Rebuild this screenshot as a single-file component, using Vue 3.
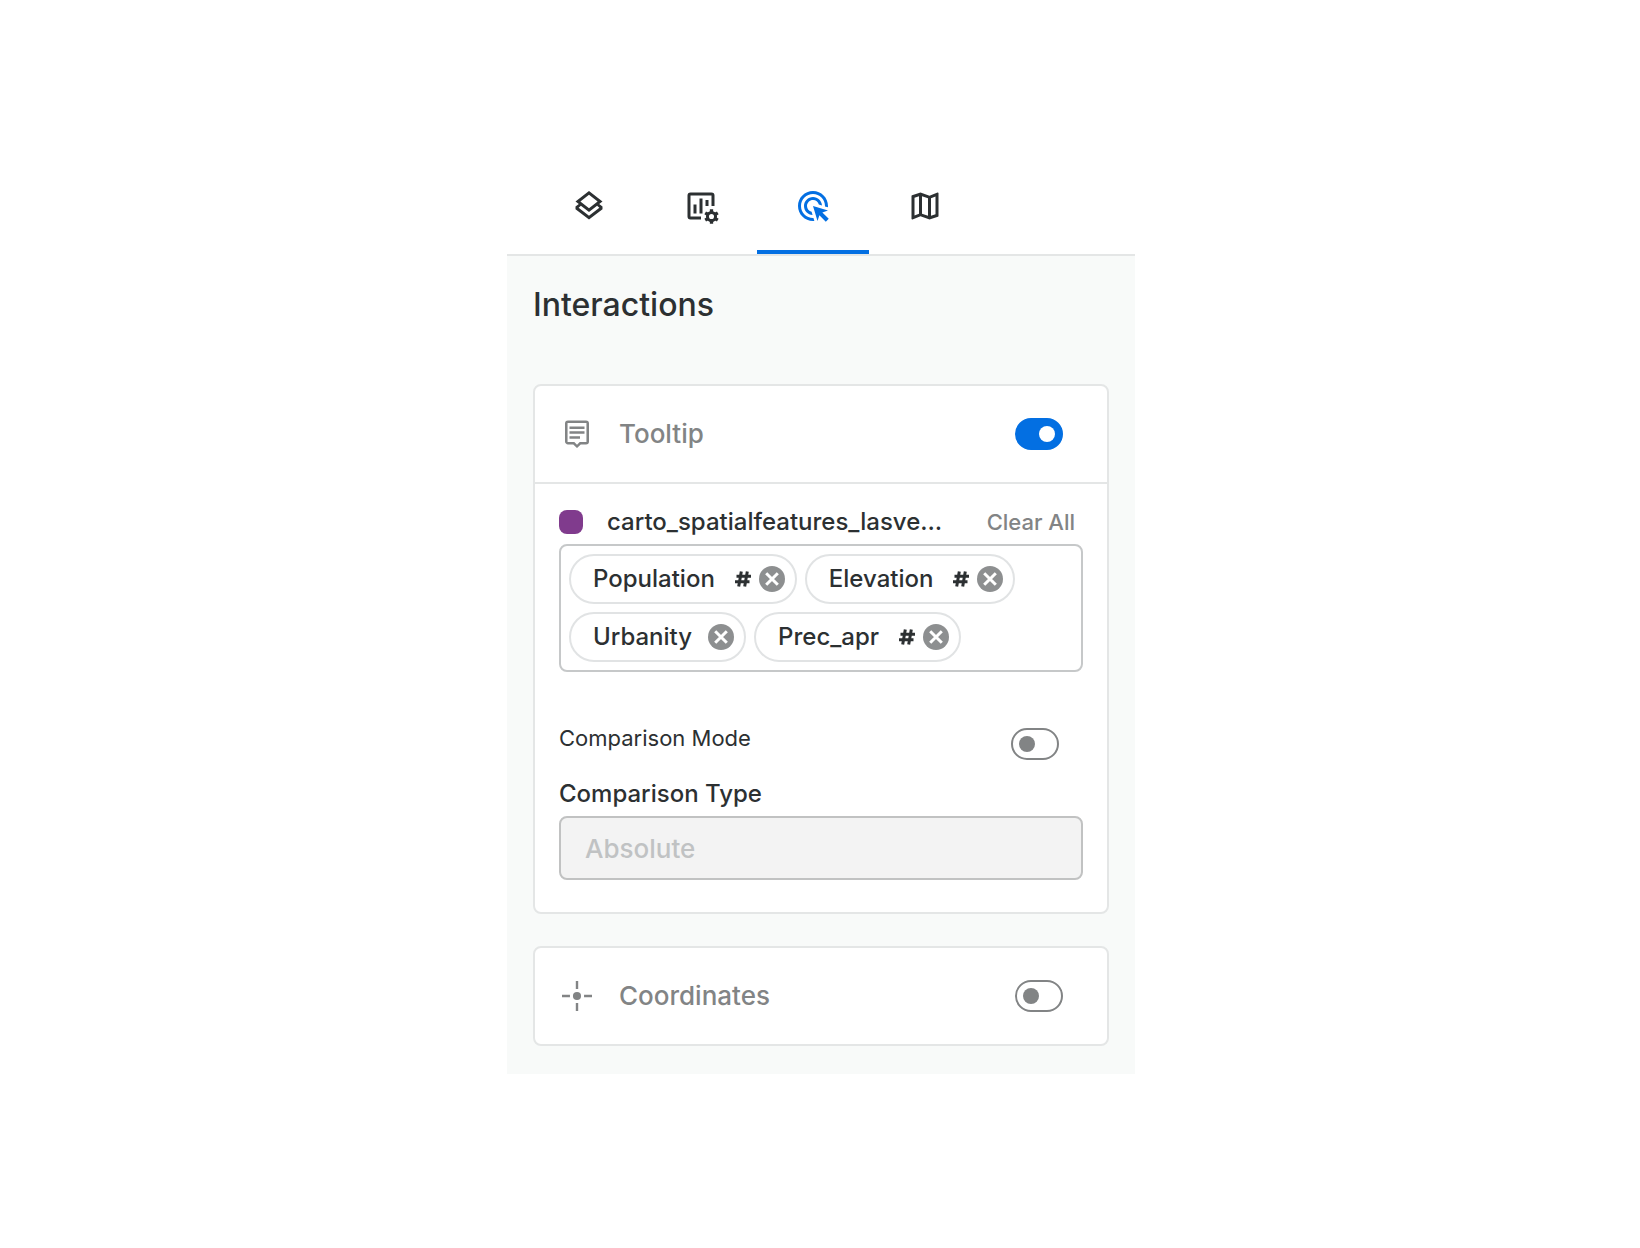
<script setup>
import { ref } from 'vue'

const tabs = [
  { id: 'layers', label: 'Layers' },
  { id: 'widgets', label: 'Widgets' },
  { id: 'interactions', label: 'Interactions' },
  { id: 'basemap', label: 'Basemap' }
]
const activeTab = ref('interactions')

const tooltipOn = ref(true)
const comparisonOn = ref(false)
const coordinatesOn = ref(false)

const fields = ref([
  { name: 'Population', numeric: true },
  { name: 'Elevation', numeric: true },
  { name: 'Urbanity', numeric: false },
  { name: 'Prec_apr', numeric: true }
])

function removeField(name) {
  fields.value = fields.value.filter((f) => f.name !== name)
}
</script>

<template>
  <div class="page">
    <main class="panel">
      <nav class="tabs" role="tablist">
        <button
          v-for="tab in tabs"
          :key="tab.id"
          type="button"
          role="tab"
          class="tab"
          :class="{ active: tab.id === activeTab }"
          :aria-selected="tab.id === activeTab"
          :aria-label="tab.label"
          @click="activeTab = tab.id"
        >
          <svg v-if="tab.id === 'layers'" class="icon" viewBox="0 0 24 24" aria-hidden="true">
            <path d="m12 2 9 7-2.200 1.700L21 12.400v1.700L12 21l-9-6.900v-1.700l2.200-1.700L3 9zm0 2.530L6.260 9 12 13.470 17.740 9zM6.600 11.900l-1.500 1.300L12 18.500l6.900-5.300-1.500-1.300L12 16z" />
          </svg>
          <svg v-else-if="tab.id === 'widgets'" class="icon" viewBox="0 0 24 24" aria-hidden="true">
            <path d="M5 3h14a2 2 0 0 1 2 2v7h-2V5H5v14h7v2H5a2 2 0 0 1-2-2V5a2 2 0 0 1 2-2zM7 11h2v6H7zM11 7h2v10h-2zM15 8h2v4h-2z" />
            <g fill="none" stroke="currentColor">
              <circle cx="19" cy="19" r="2.700" stroke-width="2" />
              <path stroke-width="2.200" d="M19 16v-1.900M19 22v1.900M21.600 17.500l1.600-.950M16.400 20.500l-1.600.950M16.400 17.500l-1.600-.950M21.600 20.500l1.600.950" />
            </g>
          </svg>
          <svg v-else-if="tab.id === 'interactions'" class="icon" viewBox="0 0 24 24" aria-hidden="true">
            <path d="M11.71 17.99C8.53 17.84 6 15.22 6 12c0-3.31 2.69-6 6-6 3.22 0 5.84 2.53 5.99 5.71l-2.1-.63C15.48 9.31 13.89 8 12 8c-2.21 0-4 1.79-4 4 0 1.89 1.31 3.48 3.08 3.89zM22 12c0 .3-.01.6-.04.9l-1.97-.59c.01-.1.01-.21.01-.31 0-4.42-3.58-8-8-8s-8 3.58-8 8 3.58 8 8 8c.1 0 .21 0 .31-.01l.59 1.97c-.3.03-.6.04-.9.04-5.52 0-10-4.48-10-10S6.48 2 12 2s10 4.48 10 10zm-3.77 4.26L22 15l-10-3 3 10 1.26-3.77 4.27 4.27 1.98-1.98z" />
          </svg>
          <svg v-else class="icon" viewBox="0 0 24 24" aria-hidden="true">
            <path d="m20.5 3-.16.03L15 5.1 9 3 3.36 4.9c-.21.07-.36.25-.36.48V20.5c0 .28.22.5.5.5l.16-.03L9 18.9l6 2.1 5.64-1.9c.21-.07.36-.25.36-.48V3.5c0-.28-.22-.5-.5-.5zM10 5.47l4 1.4v11.66l-4-1.4zm-5 .99 3-1.01v11.7l-3 1.16zm14 11.08-3 1.01V6.86l3-1.16z" />
          </svg>
        </button>
      </nav>

      <div class="content">
        <h1 class="title">Interactions</h1>

        <section class="card">
          <header class="card-header">
            <svg class="icon" viewBox="0 0 24 24" aria-hidden="true">
              <path d="M18 3H6a2 2 0 0 0-2 2v12c0 1.100.9 2 2 2h3.500L12 21.400 14.500 19H18a2 2 0 0 0 2-2V5a2 2 0 0 0-2-2zm.300 14.300h-4.500L12 19.100l-1.800-1.800H5.700V4.700h12.600zM7 7h10v1.700H7zM7 10.200h10v1.700H7zM7 13.500h7v1.700H7z" />
            </svg>
            <label class="card-title" for="tooltip-switch">Tooltip</label>
            <input id="tooltip-switch" v-model="tooltipOn" class="switch" type="checkbox" role="switch" />
          </header>

          <div class="card-body">
            <div class="layer-row">
              <span class="swatch"></span>
              <span class="layer-name">carto_spatialfeatures_lasve…</span>
              <button type="button" class="clear" @click="fields = []">Clear All</button>
            </div>

            <ul class="chips">
              <li v-for="field in fields" :key="field.name" class="chip">
                <span>{{ field.name }}</span>
                <svg v-if="field.numeric" class="hash" viewBox="0 0 16 16" aria-label="Numeric">
                  <path d="M6.300 0.500 3.700 15.500M12.300 0.500 9.700 15.500M1.500 5.200H16M0 10.800H14.500" />
                </svg>
                <button type="button" class="remove" :aria-label="`Remove ${field.name}`" @click="removeField(field.name)">
                  <svg viewBox="0 0 26 26" aria-hidden="true">
                    <circle cx="13" cy="13" r="13" />
                    <path d="m7.200 7.200 11.600 11.600M18.800 7.200 7.200 18.800" />
                  </svg>
                </button>
              </li>
            </ul>

            <div class="mode-row">
              <label for="comparison-switch">Comparison Mode</label>
              <input id="comparison-switch" v-model="comparisonOn" class="switch" type="checkbox" role="switch" />
            </div>

            <label class="type-label" for="comparison-type">Comparison Type</label>
            <select id="comparison-type" class="select" :disabled="!comparisonOn">
              <option>Absolute</option>
            </select>
          </div>
        </section>

        <section class="card">
          <header class="card-header">
            <svg class="icon" viewBox="0 0 24 24" aria-hidden="true">
              <circle cx="12" cy="12" r="2.700" />
              <path d="M11.200 2h1.600v5.300h-1.600zM11.200 16.700h1.600V22h-1.600zM2 11.200h5.300v1.600H2zM16.700 11.200H22v1.600h-5.300z" />
            </svg>
            <label class="card-title" for="coordinates-switch">Coordinates</label>
            <input id="coordinates-switch" v-model="coordinatesOn" class="switch" type="checkbox" role="switch" />
          </header>
        </section>
      </div>
    </main>
  </div>
</template>

<style>
body {
  margin: 0;
  background: #fff;
}
</style>

<style scoped>
.page {
  box-sizing: border-box;
  min-height: 100vh;
  padding: 158px 24px 48px 26px;
  font-family: Inter, "Open Sans", sans-serif;
  color: #2c3032;
}

.page *,
.page *::before {
  box-sizing: border-box;
}

button,
select {
  font-family: inherit;
  color: inherit;
}

.panel {
  max-width: 628px;
  margin: 0 auto;
}

.tabs {
  display: flex;
  padding: 0 26px;
  border-bottom: 2px solid #e4e6e6;
}

.tab {
  display: flex;
  align-items: center;
  justify-content: center;
  width: 112px;
  height: 96px;
  padding: 4px 0 0;
  border: 0;
  border-bottom: 4px solid transparent;
  background: none;
  cursor: pointer;
}

.tab.active {
  border-bottom-color: #036fe2;
  color: #036fe2;
}

.icon {
  flex: none;
  width: 36px;
  height: 36px;
  fill: currentColor;
}

.content {
  display: flex;
  flex-direction: column;
  gap: 32px;
  padding: 28px 26px;
  background: #f8faf9;
}

.title {
  margin: 0 0 26px;
  font-size: 32px;
  line-height: 42px;
  font-weight: 500;
}

.card {
  border: 2px solid #e4e6e6;
  border-radius: 8px;
  background: #fff;
}

.card-header {
  display: flex;
  align-items: center;
  height: 96px;
  padding: 0 44px 0 24px;
  color: #828485;
}

.card-title {
  flex: 1;
  padding-left: 24px;
  font-size: 26px;
  line-height: 32px;
  font-weight: 500;
}

.switch {
  flex: none;
  appearance: none;
  display: flex;
  align-items: center;
  width: 48px;
  height: 32px;
  margin: 0;
  padding: 0 6px;
  border: 2px solid #828485;
  border-radius: 16px;
  background: #fff;
  cursor: pointer;
}

.switch::before {
  content: "";
  width: 16px;
  height: 16px;
  border-radius: 50%;
  background: #828485;
}

.switch:checked {
  justify-content: flex-end;
  border-color: #036fe2;
  background: #036fe2;
}

.switch:checked::before {
  background: #fff;
}

.card-body {
  padding: 22px 24px 32px;
  border-top: 2px solid #e4e6e6;
}

.layer-row {
  display: flex;
  align-items: center;
  height: 32px;
}

.swatch {
  flex: none;
  width: 24px;
  height: 24px;
  margin-right: 24px;
  border-radius: 8px;
  background: #803b8d;
}

.layer-name {
  font-size: 24px;
  line-height: 32px;
  font-weight: 500;
  white-space: nowrap;
}

.clear {
  flex: none;
  margin-left: auto;
  padding: 0 8px;
  border: 0;
  background: none;
  color: #828485;
  font-size: 22px;
  line-height: 32px;
  font-weight: 500;
  cursor: pointer;
}

.chips {
  display: flex;
  flex-wrap: wrap;
  gap: 8px;
  margin: 6px 0 0;
  padding: 8px;
  border: 2px solid #c6c8c9;
  border-radius: 8px;
  list-style: none;
}

.chip {
  display: flex;
  align-items: center;
  height: 50px;
  padding: 0 10px 0 22px;
  border: 2px solid #e1e3e4;
  border-radius: 25px;
  font-size: 24px;
  line-height: 32px;
  font-weight: 500;
}

.hash {
  width: 16px;
  height: 16px;
  margin-left: 20px;
  margin-right: -8px;
  fill: none;
  stroke: currentColor;
  stroke-width: 3;
}

.remove {
  width: 26px;
  height: 26px;
  margin-left: 16px;
  padding: 0;
  border: 0;
  background: none;
  cursor: pointer;
}

.remove svg {
  display: block;
  fill: #8d8f90;
  stroke: #fff;
  stroke-width: 3;
}

.remove circle {
  stroke: none;
}

.mode-row {
  display: flex;
  align-items: flex-end;
  justify-content: space-between;
  margin-top: 50px;
  padding-right: 24px;
  font-size: 22px;
  line-height: 32px;
}

.mode-row label {
  padding-bottom: 6px;
}

.type-label {
  display: block;
  margin-top: 18px;
  font-size: 24px;
  line-height: 32px;
  font-weight: 500;
}

.select {
  display: block;
  appearance: none;
  width: 100%;
  height: 64px;
  margin-top: 6px;
  padding: 0 24px;
  border: 2px solid #c1c2c2;
  border-radius: 8px;
  background: #f3f3f3;
  font-size: 26px;
  font-weight: 500;
}

.select:disabled {
  color: #c0c2c3;
  opacity: 1;
}
</style>
